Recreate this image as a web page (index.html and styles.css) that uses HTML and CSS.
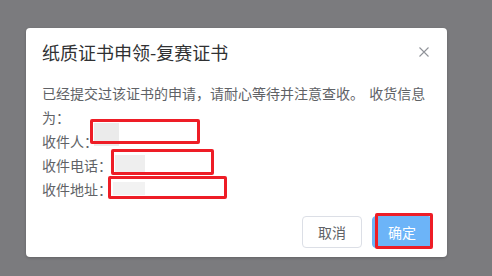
FILE: index.html
```html
<!DOCTYPE html>
<html lang="zh-CN">
<head>
<meta charset="utf-8">
<title>纸质证书申领</title>
<link rel="stylesheet" href="styles.css">
</head>
<body>
<div class="overlay">
  <div class="dialog">
    <div class="header">
      <span class="title">纸质证书申领-复赛证书</span>
      <svg class="close" width="10" height="10" viewBox="0 0 10 10"><path d="M0.5 0.5 L9.5 9.5 M9.5 0.5 L0.5 9.5" stroke="#909399" stroke-width="1.1" fill="none"/></svg>
    </div>
    <div class="body">
      <div class="para">已经提交过该证书的申请，请耐心等待并注意查收。 收货信息为：</div>
      <div class="row">收件人：
        <span class="blob b1"></span><span class="mark m1"></span>
      </div>
      <div class="row">收件电话：
        <span class="blob b2"></span><span class="mark m2"></span>
      </div>
      <div class="row">收件地址：
        <span class="blob b3"></span><span class="mark m3"></span>
      </div>
    </div>
    <div class="footer">
      <button class="btn">取消</button>
      <button class="btn primary">确定</button>
      <span class="mark m4"></span>
    </div>
  </div>
</div>
</body>
</html>
```

FILE: styles.css
```css
html, body {
  margin: 0;
  padding: 0;
  background: #7b7b7e;
  font-family: "Noto Sans CJK SC", "Noto Sans", sans-serif;
}
.overlay {
  width: 492px;
  height: 276px;
  padding: 28px 0 0 26px;
  box-sizing: border-box;
}
.dialog {
  width: 421px;
  height: 229px;
  background: #fff;
  border-radius: 4px;
  box-sizing: border-box;
  display: flex;
  flex-direction: column;
  box-shadow: 0 1px 3px rgba(0,0,0,0.2);
}
.header {
  display: flex;
  justify-content: space-between;
  align-items: center;
  padding: 12px 18px 0 16px;
}
.title {
  font-size: 18px;
  line-height: 24px;
  color: #303133;
}
.close {
  display: block;
}
.body {
  padding: 17px 16px 0 16px;
  font-size: 14px;
  line-height: 24px;
  color: #606266;
}
.para {
  word-spacing: 2px;
}
.row {
  position: relative;
  white-space: nowrap;
}
.blob {
  position: absolute;
  background: #ececec;
}
.mark {
  position: absolute;
  border: 3px solid #ee1d26;
  border-radius: 2px;
  box-sizing: border-box;
}
.b1 { left: 52px; top: -6px; width: 25px; height: 23px; background: #ebebeb; }
.m1 { left: 48px; top: -10px; width: 110px; height: 25px; }
.b2 { left: 73px; top: 2px; width: 30px; height: 18px; background: #eeeeee; }
.m2 { left: 69px; top: -4px; width: 103px; height: 26px; }
.b3 { left: 71px; top: 5px; width: 32px; height: 13px; background: #f2f2f2; }
.m3 { left: 66px; top: -1px; width: 119px; height: 23px; }
.footer {
  position: relative;
  display: flex;
  justify-content: flex-end;
  gap: 10px;
  padding: 15px 15px 0 0;
}
.btn {
  width: 60px;
  height: 32px;
  padding: 0;
  border: 1px solid #dcdfe6;
  border-radius: 4px;
  background: #fff;
  color: #606266;
  font-family: "Noto Sans CJK SC", "Noto Sans", sans-serif;
  font-size: 14px;
}
.btn.primary {
  background: #6cb4f8;
  border-color: #6cb4f8;
  color: #fff;
}
.m4 { left: 349px; top: 12px; width: 58px; height: 36px; }
```
